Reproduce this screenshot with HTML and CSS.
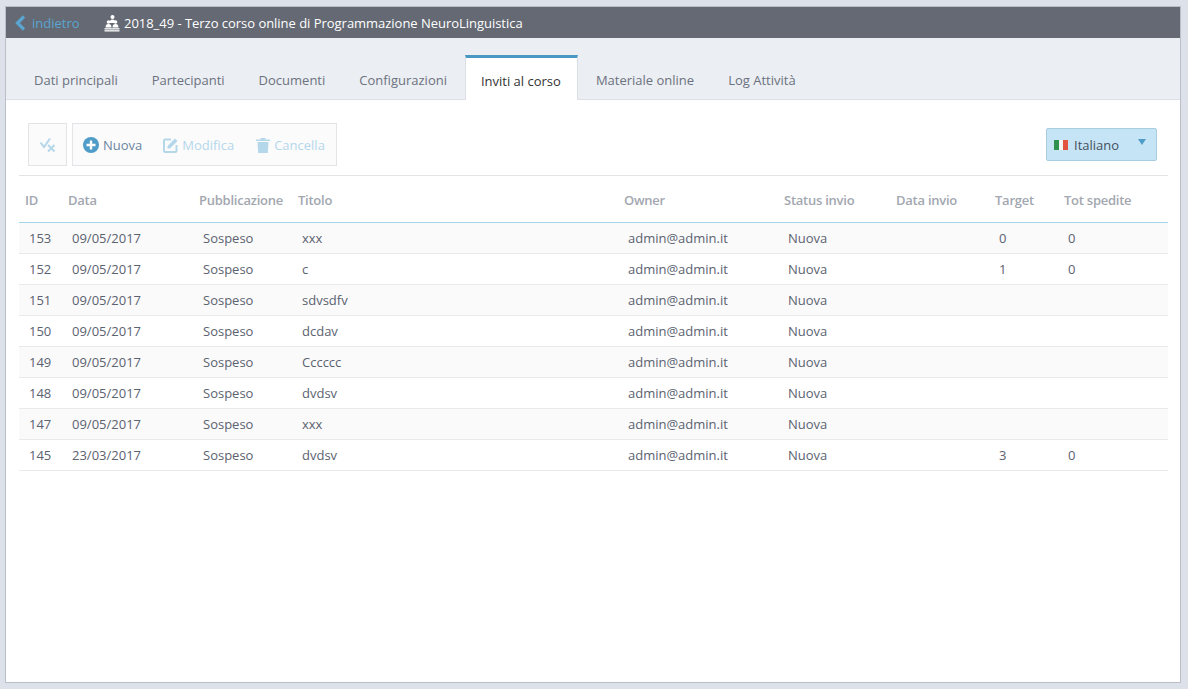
FILE: index.html
```html
<!DOCTYPE html>
<html lang="it">
<head>
  <meta charset="UTF-8" />
  <title>Inviti al corso</title>
  <link rel="stylesheet" href="styles.css">
</head>
<body>
  <div class="window">
    <div class="topbar">
      <a class="back">
        <svg class="back-icon" width="11" height="16" viewBox="0 0 11 16"><path d="M9 1.500 2.500 8 9 14.500" fill="none" stroke="#5aa5d1" stroke-width="3.200"/></svg>
        indietro
      </a>
      <svg class="course-icon" width="16" height="18" viewBox="0 0 16 18" fill="#fff">
        <circle cx="8.500" cy="3" r="2"/>
        <path d="M5.500 9c0-2 1-3.500 3-3.500s3 1.500 3 3.500z"/>
        <circle cx="4.500" cy="8" r="1.800"/><circle cx="11.500" cy="8" r="1.800"/>
        <path d="M1.500 13.500c0-2.500 1-3.500 3-3.500s3 1 3 3.500zM8.500 13.500c0-2.500 1-3.500 3-3.500s3 1 3 3.500z"/>
        <rect x="0.500" y="14.200" width="15" height="1.300"/>
        <rect x="0.500" y="16.200" width="15" height="1.300"/>
      </svg>
      <span class="course-title">2018_49 - Terzo corso online di Programmazione NeuroLinguistica</span>
    </div>

    <div class="tabs">
      <a class="tab">Dati principali</a>
      <a class="tab">Partecipanti</a>
      <a class="tab">Documenti</a>
      <a class="tab">Configurazioni</a>
      <a class="tab active">Inviti al corso</a>
      <a class="tab">Materiale online</a>
      <a class="tab">Log Attività</a>
    </div>

    <div class="content">
      <div class="toolbar">
        <div class="tool-group check-group">
          <svg width="17" height="16" viewBox="0 0 17 16" fill="none" stroke="#b5d7ea" stroke-width="2"><path d="M1.500 5.500 5 10l6-8.500"/><path d="M9 8l6.500 6.500M15.500 8 9 14.500"/></svg>
        </div>
        <div class="tool-group">
          <a class="tool enabled">
            <svg width="16" height="16" viewBox="0 0 16 16"><circle cx="8" cy="8" r="8" fill="#4f9cc8"/><path d="M8 3.500v9M3.500 8h9" stroke="#fff" stroke-width="2.400"/></svg>
            Nuova
          </a>
          <a class="tool tool-edit">
            <svg width="15" height="16" viewBox="0 0 15 16" fill="none"><path d="M8 2.500H2a1 1 0 0 0-1 1V14a1 1 0 0 0 1 1h10.500a1 1 0 0 0 1-1V8" stroke="#b5d7ea" stroke-width="2"/><path d="M4.500 11.500V9L12 1.500 14.500 4 7 11.500z" fill="#b5d7ea"/></svg>
            Modifica
          </a>
          <a class="tool">
            <svg width="14" height="16" viewBox="0 0 14 16" fill="#b5d7ea"><path d="M0 2.500h4.500V1h5v1.500H14V4H0zM1.500 5h11l-.7 11H2.200z"/></svg>
            Cancella
          </a>
        </div>
        <div class="lang">
          <span class="flag"><i class="green"></i><i class="white"></i><i class="red"></i></span>
          <span class="lang-name">Italiano</span>
          <span class="caret"></span>
        </div>
      </div>

      <table class="grid">
        <thead>
          <tr>
            <th class="c-id">ID</th><th class="c-data">Data</th><th class="c-pub">Pubblicazione</th><th class="c-tit">Titolo</th><th class="c-own">Owner</th><th class="c-st">Status invio</th><th class="c-di">Data invio</th><th class="c-tg">Target</th><th>Tot spedite</th>
          </tr>
        </thead>
        <tbody>
          <tr><td>153</td><td>09/05/2017</td><td>Sospeso</td><td>xxx</td><td>admin@admin.it</td><td>Nuova</td><td></td><td>0</td><td>0</td></tr>
          <tr><td>152</td><td>09/05/2017</td><td>Sospeso</td><td>c</td><td>admin@admin.it</td><td>Nuova</td><td></td><td>1</td><td>0</td></tr>
          <tr><td>151</td><td>09/05/2017</td><td>Sospeso</td><td>sdvsdfv</td><td>admin@admin.it</td><td>Nuova</td><td></td><td></td><td></td></tr>
          <tr><td>150</td><td>09/05/2017</td><td>Sospeso</td><td>dcdav</td><td>admin@admin.it</td><td>Nuova</td><td></td><td></td><td></td></tr>
          <tr><td>149</td><td>09/05/2017</td><td>Sospeso</td><td>Cccccc</td><td>admin@admin.it</td><td>Nuova</td><td></td><td></td><td></td></tr>
          <tr><td>148</td><td>09/05/2017</td><td>Sospeso</td><td>dvdsv</td><td>admin@admin.it</td><td>Nuova</td><td></td><td></td><td></td></tr>
          <tr><td>147</td><td>09/05/2017</td><td>Sospeso</td><td>xxx</td><td>admin@admin.it</td><td>Nuova</td><td></td><td></td><td></td></tr>
          <tr><td>145</td><td>23/03/2017</td><td>Sospeso</td><td>dvdsv</td><td>admin@admin.it</td><td>Nuova</td><td></td><td>3</td><td>0</td></tr>
        </tbody>
      </table>
    </div>
  </div>
</body>
</html>
```

FILE: styles.css
```css
* {
  box-sizing: border-box;
}
html, body {
  height: 100%;
}
body {
  margin: 0;
  padding: 6px 7px 6px 5px;
  background: #dde1ea;
  font-family: "Open Sans", sans-serif;
  font-size: 13px;
  color: #5b6270;
  overflow: hidden;
}
.window {
  height: 677px;
  background: #fff;
  border: 1px solid #b9bec8;
  display: flex;
  flex-direction: column;
}
.topbar {
  height: 31px;
  background: #646973;
  display: flex;
  align-items: center;
  padding-left: 9px;
  flex: none;
}
.back {
  display: flex;
  align-items: center;
  gap: 6px;
  color: #5aa5d1;
  width: 89px;
}
.course-icon {
  margin-right: 4px;
}
.course-title {
  color: #fff;
  letter-spacing: -0.03px;
}
.tabs {
  height: 62px;
  flex: none;
  background: #ebeef2;
  border-bottom: 1px solid #dcdfe5;
  display: flex;
  align-items: flex-end;
  padding-left: 11px;
}
.tab {
  height: 45px;
  padding: 17px 17px 0;
  color: #6b7280;
  white-space: nowrap;
}
.tab.active {
  background: #fff;
  color: #333;
  border-top: 3px solid #4a97c4;
  border-left: 1px solid #dcdfe5;
  border-right: 1px solid #dcdfe5;
  padding: 14px 16px 0 15px;
  margin: 0 1px -1px 1px;
}
.content {
  padding: 23px 12px 0 13px;
}
.toolbar {
  display: flex;
  align-items: center;
  gap: 5px;
  height: 53px;
  padding: 0 11px 9px 9px;
  border-bottom: 1px solid #e2e4e8;
}
.tool-group {
  height: 43px;
  display: flex;
  align-items: center;
  background: #fbfbfc;
  border: 1px solid #e2e4e8;
  padding: 0 11px 0 10px;
  gap: 21px;
}
.check-group {
  width: 39px;
  justify-content: center;
  padding: 0;
}
.tool {
  display: flex;
  align-items: center;
  gap: 4px;
  color: #b5d7ea;
}
.tool.enabled {
  color: #6b85a0;
}
.tool-edit {
  margin-right: 1px;
}
.lang {
  margin-left: auto;
  width: 111px;
  height: 33px;
  background: #c5e4f5;
  border: 1px solid #a9cde0;
  border-radius: 2px;
  display: flex;
  align-items: center;
  padding-left: 7px;
  color: #45505e;
}
.flag {
  display: flex;
  width: 14px;
  height: 10px;
  margin-right: 6px;
}
.flag i {
  flex: 1;
}
.green { background: #2f9150; }
.white { background: #f4f4f4; }
.red { background: #e2533f; }
.caret {
  margin-left: 19px;
  margin-top: -6px;
  border-left: 4px solid transparent;
  border-right: 4px solid transparent;
  border-top: 6px solid #4f9cc8;
}
.grid {
  width: 100%;
  table-layout: fixed;
  border-collapse: separate;
  border-spacing: 0;
  font-size: 13px;
}
.grid th {
  height: 47px;
  padding: 2px 0 0 7px;
  text-align: left;
  font-weight: 600;
  letter-spacing: -0.25px;
  color: #a3a7b0;
  border-bottom: 1px solid #a5d5ea;
}
.grid th.c-id {
  padding-left: 6px;
}
.grid td {
  height: 31px;
  padding: 0 0 0 11px;
  color: #5b6270;
  border-bottom: 1px solid #e8eaed;
}
.grid td:first-child {
  padding-left: 10px;
}
.grid tbody tr:nth-child(odd) {
  background: #fafafa;
}
.c-id { width: 42px; }
.c-data { width: 131px; }
.c-pub { width: 99px; }
.c-tit { width: 326px; }
.c-own { width: 160px; }
.c-st { width: 112px; }
.c-di { width: 99px; }
.c-tg { width: 69px; }
```
